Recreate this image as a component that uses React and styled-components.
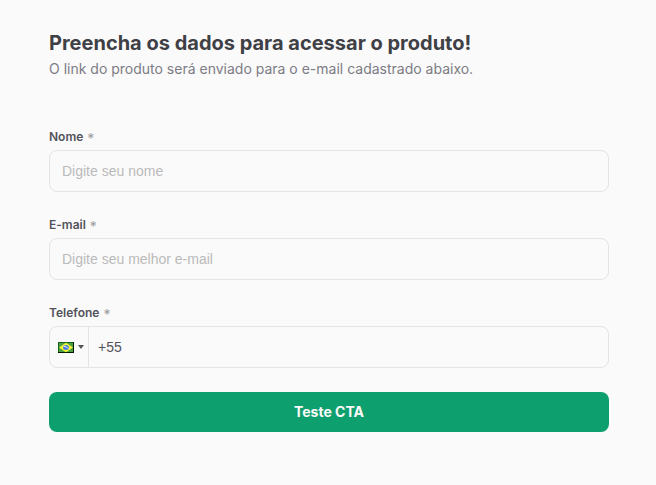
import React from 'react';
import styled, { createGlobalStyle } from 'styled-components';

const GlobalStyle = createGlobalStyle`
  * { box-sizing: border-box; }
  body {
    margin: 0;
    background: #fafafa;
    font-family: Inter, sans-serif;
    color: #3f3f46;
  }
`;

const Page = styled.main`
  padding: 31px 47px 52px 49px;
`;

const Header = styled.header`
  margin-bottom: 49px;
`;

const Title = styled.h1`
  margin: 0;
  font-size: 20px;
  line-height: 24px;
  font-weight: 700;
`;

const Subtitle = styled.p`
  margin: 4px 0 0;
  font-size: 14px;
  line-height: 20px;
  color: #7c7c84;
`;

const Form = styled.form`
  display: flex;
  flex-direction: column;
  gap: 24px;
`;

const Field = styled.div`
  display: flex;
  flex-direction: column;
  gap: 4px;
`;

const Label = styled.label`
  display: flex;
  gap: 4px;
  height: 18px;
  font-size: 12px;
  line-height: 18px;
  font-weight: 600;
  color: #52525b;
`;

const Required = styled.span`
  font-size: 14px;
  line-height: 22px;
  font-weight: 400;
  color: #9b9ba1;
`;

const Control = styled.div`
  display: flex;
  height: 42px;
  border: 1px solid #e4e4e7;
  border-radius: 8px;
  overflow: hidden;
`;

const Input = styled.input`
  flex: 1;
  min-width: 0;
  padding: 0 ${(p) => (p.$phone ? 9 : 12)}px;
  border: 0;
  outline: 0;
  background: transparent;
  font-family: "Liberation Sans", sans-serif;
  font-size: 14px;
  color: #52525b;
  &::placeholder { color: #bababa; opacity: 1; }
`;

const CountryButton = styled.button`
  display: flex;
  align-items: center;
  gap: 4px;
  width: 39px;
  padding: 0 0 0 8px;
  border: 0;
  border-right: 1px solid #e4e4e7;
  background: transparent;
`;

const Caret = styled.span`
  border: 3px solid transparent;
  border-top: 4px solid #555;
  border-bottom: 0;
`;

const Submit = styled.button`
  height: 40px;
  padding: 0 12px 2px;
  border: 0;
  border-radius: 8px;
  background: #0e9f6e;
  color: #fafafa;
  font-family: Inter, sans-serif;
  font-size: 14px;
  font-weight: 700;
`;

function BrazilFlag() {
  return (
    <svg width="16" height="11" viewBox="0 0 16 11" aria-hidden="true">
      <rect width="16" height="11" fill="#001a00" />
      <path d="M0 0H15V1H1V10H0Z" fill="#14641a" />
      <rect x="1" y="1" width="14" height="9" fill="#4fa045" />
      <path d="M8 1 14.5 5.5 8 10 1.5 5.5Z" fill="#fdfa32" stroke="#fdfa32" strokeWidth="0.5" />
      <ellipse cx="8" cy="5.5" rx="3" ry="2.5" fill="#4a7ce0" />
      <path d="M5.5 4.2Q8 4.2 10.5 6.5" stroke="#dce8f4" fill="none" />
    </svg>
  );
}

function TextField({ id, label, phone, children, ...input }) {
  return (
    <Field>
      <Label htmlFor={id}>{label}<Required>*</Required></Label>
      <Control>
        {children}
        <Input id={id} $phone={phone} {...input} />
      </Control>
    </Field>
  );
}

export default function App() {
  return (
    <>
      <GlobalStyle />
      <Page>
        <Header>
          <Title>Preencha os dados para acessar o produto!</Title>
          <Subtitle>O link do produto será enviado para o e-mail cadastrado abaixo.</Subtitle>
        </Header>
        <Form onSubmit={(e) => e.preventDefault()}>
          <TextField id="nome" label="Nome" type="text" placeholder="Digite seu nome" />
          <TextField id="email" label="E-mail" type="email" placeholder="Digite seu melhor e-mail" />
          <TextField id="telefone" label="Telefone" type="tel" defaultValue="+55" phone>
            <CountryButton type="button" aria-label="Brasil">
              <BrazilFlag />
              <Caret />
            </CountryButton>
          </TextField>
          <Submit type="submit">Teste CTA</Submit>
        </Form>
      </Page>
    </>
  );
}
